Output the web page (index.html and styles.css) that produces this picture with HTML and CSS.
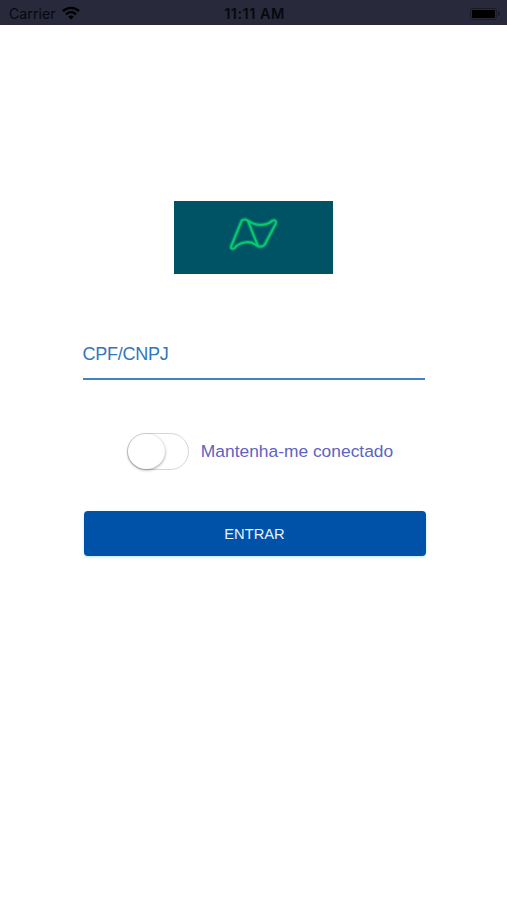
FILE: index.html
```html
<!DOCTYPE html>
<html lang="pt-BR">
<head>
  <meta charset="UTF-8">
  <meta name="viewport" content="width=device-width, initial-scale=1.0">
  <title>Login</title>
  <link rel="stylesheet" href="styles.css">
</head>
<body>
  <!-- barra de status -->
  <header class="status-bar">
    <div class="carrier">
      <span class="carrier-name">Carrier</span>
      <svg class="wifi" viewBox="0 0 18 14">
        <path d="M1 5.2C5.5 .8 12.500 .8 17 5.200" />
        <path d="M4 8.400C7 5.600 11 5.600 14 8.400" />
        <path class="wifi-dot" d="M6.200 10.600C7.800 9.200 10.200 9.200 11.800 10.600L9 13.500Z" />
      </svg>
    </div>
    <div class="clock">11:11 AM</div>
    <div class="battery-area">
      <div class="battery"><div class="battery-level"></div></div>
      <div class="battery-tip"></div>
    </div>
  </header>

  <!-- login -->
  <main class="login">
    <div class="logo">
      <svg class="logo-mark" viewBox="0 0 192 156">
        <path class="glow" d="M59 38L28 114Q25 125 37 121C51 101 84 98 99 109Q116 122 128 110L161 47Q164 34 151 38C132 55 101 54 82 40Q67 30 59 38M78 39L107 112" />
        <path class="line" d="M59 38L28 114Q25 125 37 121C51 101 84 98 99 109Q116 122 128 110L161 47Q164 34 151 38C132 55 101 54 82 40Q67 30 59 38M78 39L107 112" />
      </svg>
    </div>
    <input class="document" type="text" placeholder="CPF/CNPJ">
    <label class="keep">
      <input class="keep-check" type="checkbox">
      <span class="switch"></span>
      <span class="keep-text">Mantenha-me conectado</span>
    </label>
    <button class="enter">ENTRAR</button>
  </main>
</body>
</html>
```

FILE: styles.css
```css
* {
  box-sizing: border-box;
}
body {
  margin: 0;
  min-height: 100vh;
  background-color: #fff;
  font-family: "Liberation Sans", Arial, sans-serif;
}
.status-bar {
  display: grid;
  grid-template-columns: 1fr auto 1fr;
  align-items: center;
  height: 25px;
  padding: 2px 7px 0 9px;
  background-color: #28293a;
  color: #07080f;
}
.carrier {
  display: flex;
  align-items: center;
  gap: 6px;
  font-family: Inter, sans-serif;
  font-size: 14px;
  letter-spacing: 0.1px;
}
.wifi {
  width: 18px;
  height: 14px;
  margin-top: -1px;
  fill: none;
  stroke: #000;
  stroke-width: 2.4;
}
.wifi .wifi-dot {
  fill: #000;
  stroke: none;
}
.clock {
  font-family: Inter, sans-serif;
  font-size: 14.5px;
  font-weight: 600;
  letter-spacing: 0.5px;
}
.battery-area {
  display: flex;
  align-items: center;
  justify-content: flex-end;
  gap: 1px;
}
.battery {
  width: 27px;
  height: 12px;
  padding: 1px;
  border: 1px solid #1b1b28;
  border-radius: 3px;
}
.battery-level {
  height: 8px;
  border-radius: 1px;
  background-color: #000;
}
.battery-tip {
  width: 2px;
  height: 5px;
  border-radius: 0 2px 2px 0;
  background-color: #1b1b28;
}
.login {
  display: flex;
  flex-direction: column;
  align-items: center;
  width: 343px;
  margin: 0 auto;
  padding-top: 176px;
}
.logo {
  width: 159px;
  height: 73px;
  padding: 7px 0 0 48px;
  background-color: #005365;
}
.logo-mark {
  display: block;
  width: 64px;
  height: 52px;
  fill: none;
  stroke-linejoin: round;
  stroke-linecap: round;
}
.glow {
  stroke: #05ad69;
  stroke-width: 14;
  opacity: 0.4;
}
.line {
  stroke: #08c871;
  stroke-width: 6.5;
}
.document {
  width: 342px;
  height: 44px;
  margin-top: 62px;
  padding: 0 0 6px;
  border: none;
  border-bottom: 2px solid #4083c9;
  font-family: inherit;
  font-size: 18px;
  letter-spacing: -0.25px;
  outline: none;
}
.document::placeholder {
  color: #3275bb;
  opacity: 1;
}
.keep {
  display: flex;
  align-items: center;
  gap: 12px;
  margin-top: 53px;
  margin-left: 13px;
  cursor: pointer;
}
.keep-check {
  display: none;
}
.switch {
  width: 62px;
  height: 37px;
  border: 1px solid #d6d6d4;
  border-radius: 19px;
}
.switch::before {
  content: "";
  display: block;
  width: 37px;
  height: 35px;
  border-radius: 50%;
  background-color: #fff;
  box-shadow: 0 1px 3px rgba(0, 0, 0, 0.4);
}
.keep-check:checked + .switch {
  background-color: #0052a8;
}
.keep-check:checked + .switch::before {
  margin-left: 23px;
}
.keep-text {
  color: #6063c2;
  font-size: 17.4px;
}
.enter {
  width: 342px;
  height: 45px;
  margin: 41px 0 0 2px;
  padding: 1px 0 0;
  border: none;
  border-radius: 4px;
  background-color: #0052a8;
  box-shadow: 0 1px 3px #b6e6f8;
  color: #e6f1fc;
  font-family: inherit;
  font-size: 14.7px;
  cursor: pointer;
}
```
